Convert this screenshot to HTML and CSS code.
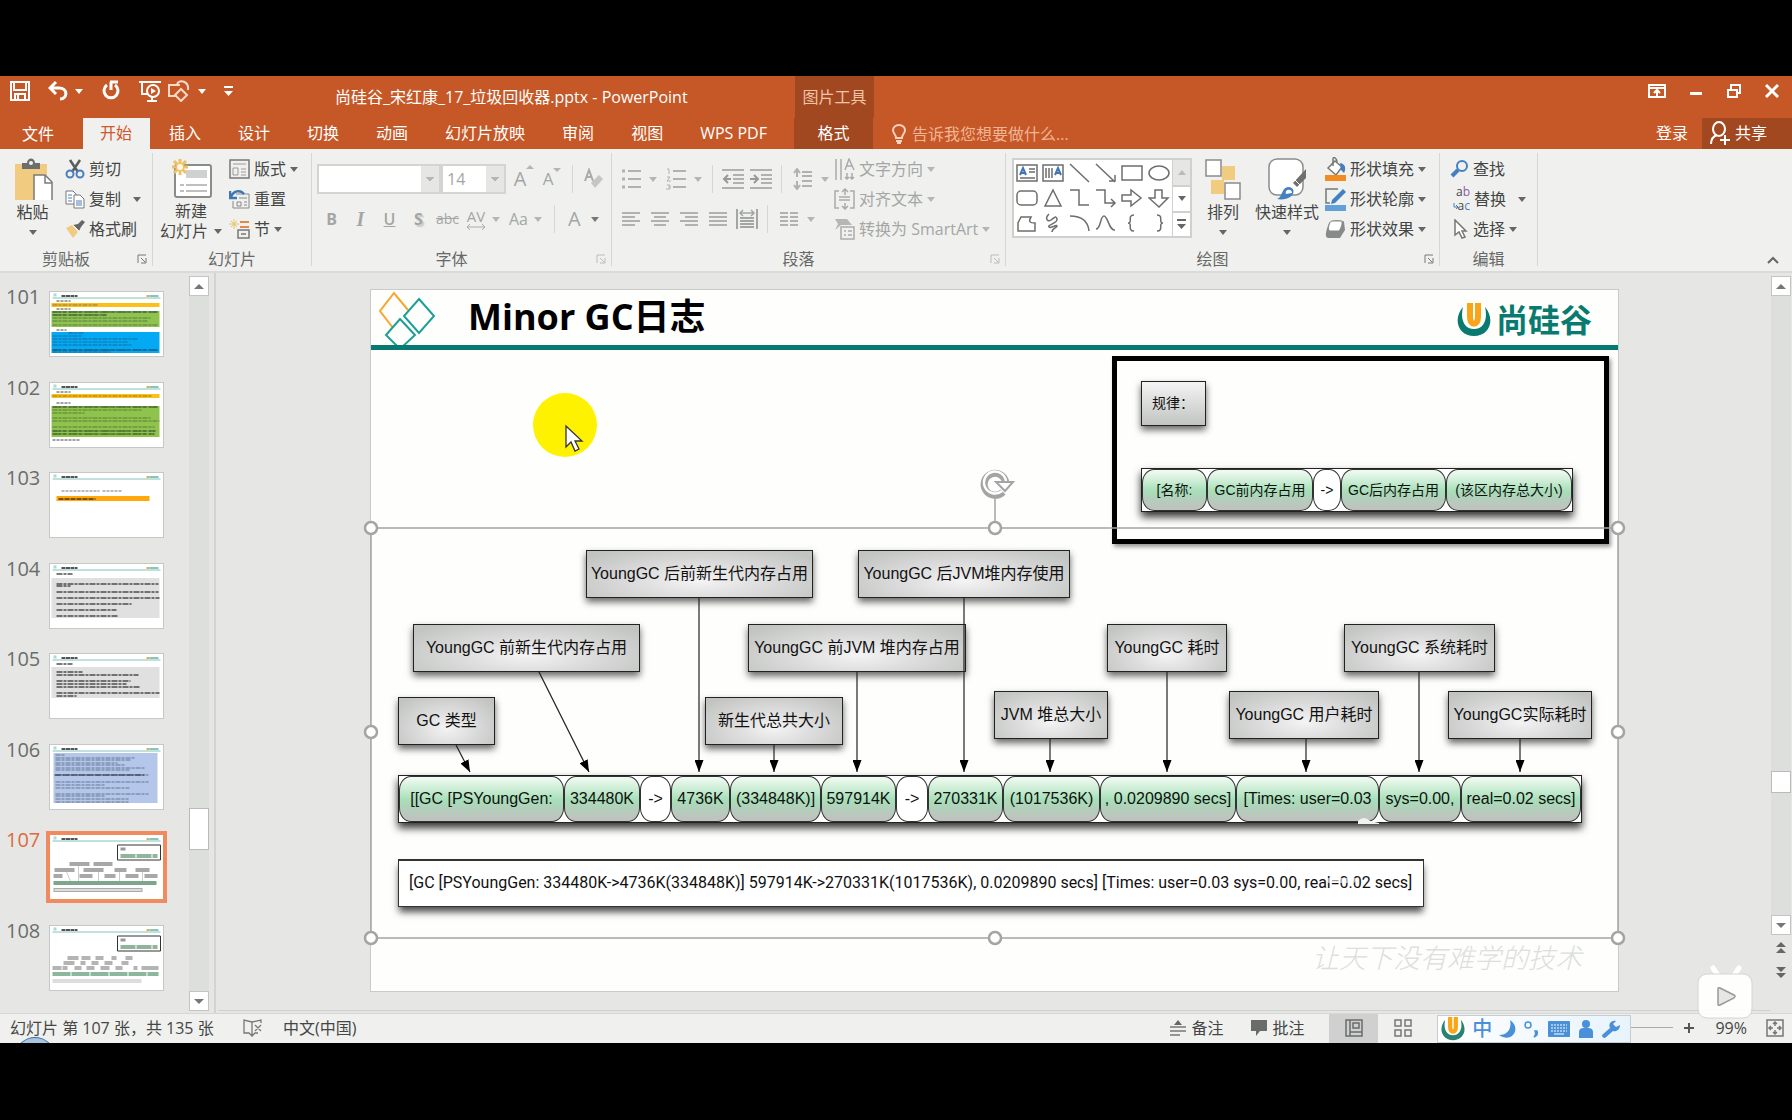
FILE: index.html
```html
<!DOCTYPE html>
<html lang="zh-CN">
<head>
<meta charset="utf-8">
<title>尚硅谷_宋红康_17_垃圾回收器.pptx - PowerPoint</title>
<link rel="stylesheet" href="styles.css">
</head>
<body>
<div class="app">
<header class="header">
  <div class="title-row">
    <div class="quick">
      <button class="q" aria-label="保存"><svg width="20" height="22" viewBox="0 0 20 22" fill="none" stroke="#fff" stroke-width="2"><path d="M1 2h18v18H1zM4 2v8h12V2M5 20v-6h10v6M8 15v4"/></svg></button>
      <button class="q undo" aria-label="撤消"><svg width="20" height="22" viewBox="0 0 20 22" fill="none" stroke="#fff" stroke-width="3"><path d="M2 8h9c9 0 9 11 1 11M8 2L2 8l6 6"/></svg><span class="caret"></span></button>
      <button class="q" aria-label="重复"><svg width="20" height="22" viewBox="0 0 20 22" fill="none" stroke="#fff" stroke-width="3"><path d="M6 5a7 7 0 1 0 8 0M9 2h8M10 2v8"/></svg></button>
      <button class="q" aria-label="从头放映"><svg width="22" height="22" viewBox="0 0 22 22" fill="none" stroke="#fff" stroke-width="2"><path d="M0 2h22M3 3v11h6M8 21h10M13 17v4"/><circle cx="14" cy="11" r="6"/><path d="M12 8l5 3-5 3z" fill="#fff" stroke="none"/></svg></button>
      <button class="q" aria-label="形状"><svg width="24" height="22" viewBox="0 0 24 22" fill="none" stroke="#fbd9c8" stroke-width="2"><path d="M10 16H2V5h11M10 4c3-5 12-3 11 6M14 9l6 6-6 6-6-6z"/></svg><span class="caret"></span></button>
      <button class="q more" aria-label="自定义快速访问工具栏"><svg width="9" height="12" viewBox="0 0 9 12" fill="#fff"><path d="M0 1h9v2H0zM0 6h9l-4.500 5z"/></svg></button>
    </div>
    <h1 class="doc-title">尚硅谷_宋红康_17_垃圾回收器.pptx - PowerPoint</h1>
    <div class="context-title">图片工具</div>
    <div class="window-buttons">
      <button aria-label="功能区显示选项"><svg width="18" height="16" viewBox="0 0 18 16" fill="none" stroke="#fff" stroke-width="2"><path d="M1 2h16v12H1zM1 5h16M9 13V7M6 10l3-3 3 3"/></svg></button>
      <button aria-label="最小化"><svg width="14" height="16" viewBox="0 0 14 16"><path d="M1 9h12v3H1z" fill="#fff"/></svg></button>
      <button aria-label="还原"><svg width="16" height="16" viewBox="0 0 16 16" fill="none" stroke="#fff" stroke-width="2"><path d="M2 7h9v7H2zM5 6V2h9v8h-3"/></svg></button>
      <button aria-label="关闭"><svg width="14" height="16" viewBox="0 0 14 16" stroke="#fff" stroke-width="3"><path d="M1 2l12 12M13 2L1 14"/></svg></button>
    </div>
  </div>
  <nav class="tabs">
    <button class="tab file">文件</button>
    <button class="tab active">开始</button>
    <button class="tab">插入</button>
    <button class="tab">设计</button>
    <button class="tab">切换</button>
    <button class="tab">动画</button>
    <button class="tab">幻灯片放映</button>
    <button class="tab">审阅</button>
    <button class="tab">视图</button>
    <button class="tab">WPS PDF</button>
    <button class="tab context">格式</button>
    <label class="tell"><svg width="14" height="20" viewBox="0 0 14 20" fill="none" stroke="#f8d3bf" stroke-width="2"><path d="M4 14c0-4-3-4-3-8a6 5 0 0 1 12 0c0 4-3 4-3 8zM4 17h6M5 19h4"/></svg><input type="text" placeholder="告诉我您想要做什么..." aria-label="告诉我您想要做什么"></label>
    <button class="tab login">登录</button>
    <button class="tab share"><svg width="20" height="24" viewBox="0 0 20 24" fill="none" stroke="#fff" stroke-width="2"><ellipse cx="9" cy="8" rx="6" ry="7"/><path d="M1 23c0-5 3-8 6-9M10 19h10M15 14v10"/></svg>共享</button>
  </nav>
</header>

<section class="ribbon" aria-label="开始">
  <div class="group g-clip">
    <div class="group-body">
      <button class="big paste"><svg width="40" height="42" viewBox="0 0 40 42"><path d="M2 6h32v36H2z" fill="#f1cb7f"/><path d="M9 5h5c0-6 8-6 8 0h5v6H9z" fill="#6d6f6e"/><circle cx="18" cy="5" r="2" fill="#f0f1ef"/><path d="M21 17h11l7 7v19H21z" fill="#fff" stroke="#7a7c7b" stroke-width="1.500"/><path d="M32 17v8h7" fill="none" stroke="#7a7c7b" stroke-width="1.500"/></svg><span>粘贴</span><span class="caret"></span></button>
      <div class="cmds">
        <button class="cmd"><svg width="20" height="20" viewBox="0 0 20 20" fill="none" stroke-width="2"><path d="M5 1l8 12M15 1L7 13" stroke="#5b5d5c" stroke-width="2.500"/><circle cx="5" cy="15" r="3.500" stroke="#4a7fbd"/><circle cx="15" cy="15" r="3.500" stroke="#4a7fbd"/></svg>剪切</button>
        <button class="cmd wide"><svg width="20" height="20" viewBox="0 0 20 20" fill="#fff" stroke="#777"><path d="M1 2h7l3 3v10H1z"/><path d="M9 6h6l4 4v9H9z"/><path d="M3 6h4M3 9h4M3 12h4M11 12h6M11 14h6M11 16h6" stroke="#4a7fbd"/></svg>复制<span class="caret"></span></button>
        <button class="cmd"><svg width="20" height="20" viewBox="0 0 20 20"><path d="M1 9l6-3 6 7-5 6z" fill="#f1cb7f"/><path d="M8 6l5-1 4-4 3 2-4 5-2 4z" fill="#666"/><path d="M8 6l6 6" stroke="#f0f1ef"/></svg>格式刷</button>
      </div>
    </div>
    <div class="group-label"><span>剪贴板</span><button class="launch" aria-label="剪贴板选项"><svg width="10" height="10" viewBox="0 0 10 10" fill="none" stroke="#777"><path d="M1 9V1h8M4 4l4 4M9 4v5H4"/></svg></button></div>
  </div>
  <div class="group g-slides">
    <div class="group-body">
      <button class="big newslide"><svg width="42" height="42" viewBox="0 0 42 42"><rect x="5" y="8" width="36" height="32" rx="2" fill="#fff" stroke="#8a8c8b" stroke-width="2"/><path d="M16 13h21v8H16z" fill="#cfd0d0"/><path d="M10 28h4M16 28h21M10 34h4M16 34h21" stroke="#aaa" stroke-width="1.500"/><g stroke="#eec068" stroke-width="3"><path d="M10 2v16M2 10h16M4 4l12 12M16 4L4 16"/></g><circle cx="10" cy="10" r="3" fill="#fff6e0"/></svg><span>新建</span><span class="line">幻灯片<i class="caret"></i></span></button>
      <div class="cmds">
        <button class="cmd"><svg width="21" height="20" viewBox="0 0 21 20" fill="none" stroke="#777"><path d="M1 1h19v18H1z" stroke-width="1.500"/><path d="M4 5h13M4 9h5v7H4zM12 10h5M12 13h5M12 16h5" stroke="#999"/></svg>版式<span class="caret"></span></button>
        <button class="cmd"><svg width="21" height="20" viewBox="0 0 21 20" fill="none"><path d="M7 5h13v14H4v-7M10 9h8M8 13h4v4H8zM15 13h3M15 16h3" stroke="#888"/><path d="M2 8c2-6 9-8 13-3M1 2v7h7" stroke="#3f74b5" stroke-width="2.500"/></svg>重置</button>
        <button class="cmd"><svg width="21" height="20" viewBox="0 0 21 20" fill="none"><path d="M11 3h9M11 8h9" stroke="#dc8b4c" stroke-width="2"/><path d="M9 11h11v8H9zM12 15h5" stroke="#777" stroke-width="1.500"/><path d="M5 0v10M0 5h10M2 2l6 6M8 2L2 8" stroke="#efc06c"/></svg>节<span class="caret"></span></button>
      </div>
    </div>
    <div class="group-label solo"><span>幻灯片</span></div>
  </div>
  <div class="group g-font off">
    <div class="group-body stack">
      <div class="row tall">
        <select class="combo font" aria-label="字体"><option></option></select>
        <select class="combo size" aria-label="字号"><option>14</option></select>
        <button class="ib fs" aria-label="增大字号">A<sup class="up"></sup></button>
        <button class="ib fs small" aria-label="减小字号">A<sup class="down"></sup></button>
        <i class="sep"></i>
        <button class="ib" aria-label="清除格式"><svg width="20" height="22" viewBox="0 0 20 22"><path d="M2 13L6 2l4 11M3 9h6" fill="none" stroke="#aaa" stroke-width="2"/><path d="M8 15l8-8 4 4-8 9z" fill="#c4c6c5"/></svg></button>
      </div>
      <div class="row">
        <button class="ib b">B</button><button class="ib i">I</button><button class="ib u">U</button><button class="ib s">S</button><button class="ib abc">abc</button>
        <button class="split av"><span>AV<svg width="20" height="7" viewBox="0 0 20 7" fill="none" stroke="#aaa"><path d="M1 4h18M4 1L1 4l3 3M16 1l3 3-3 3"/></svg></span><i class="caret"></i></button>
        <button class="split">Aa<i class="caret"></i></button>
        <i class="sep"></i>
        <button class="split color">A<i class="caret dark"></i></button>
      </div>
    </div>
    <div class="group-label"><span>字体</span><button class="launch" aria-label="字体选项"><svg width="10" height="10" viewBox="0 0 10 10" fill="none" stroke="#bbb"><path d="M1 9V1h8M4 4l4 4M9 4v5H4"/></svg></button></div>
  </div>
  <div class="group g-para off">
    <div class="group-body">
      <div class="stack para">
        <div class="row tall">
          <button class="split" aria-label="项目符号"><svg width="20" height="22" viewBox="0 0 20 22" stroke="#b0b2b1" stroke-width="2"><path d="M7 3h13M7 11h13M7 19h13"/><path d="M1 3h3M1 11h3M1 19h3" stroke-width="3"/></svg><i class="caret"></i></button>
          <button class="split" aria-label="编号"><svg width="20" height="22" viewBox="0 0 20 22" fill="none" stroke="#b0b2b1" stroke-width="2"><path d="M7 3h13M7 11h13M7 19h13"/><path d="M1 1h2v5M1 9h3l-3 4h4M1 17h3v4H0M2 19h2" stroke-width="1"/></svg><i class="caret"></i></button>
          <i class="sep"></i>
          <button class="ib" aria-label="减少缩进"><svg width="22" height="20" viewBox="0 0 22 20" fill="none" stroke="#b0b2b1" stroke-width="2"><path d="M0 1h22M11 6h11M11 10h11M11 14h11M0 19h22"/><path d="M9 10H2M6 6l-4 4 4 4" stroke="#999"/></svg></button>
          <button class="ib" aria-label="增加缩进"><svg width="22" height="20" viewBox="0 0 22 20" fill="none" stroke="#b0b2b1" stroke-width="2"><path d="M0 1h22M11 6h11M11 10h11M11 14h11M0 19h22"/><path d="M0 10h8M4 6l4 4-4 4" stroke="#999"/></svg></button>
          <i class="sep"></i>
          <button class="split" aria-label="行距"><svg width="20" height="22" viewBox="0 0 20 22" fill="none" stroke="#b0b2b1" stroke-width="2"><path d="M9 4h10M9 8h10M9 13h10M9 18h10M4 2v7M1 5l3-4 3 4M4 13v7M1 17l3 4 3-4"/></svg><i class="caret"></i></button>
        </div>
        <div class="row">
          <button class="ib" aria-label="左对齐"><svg width="20" height="16" viewBox="0 0 20 16" stroke="#b0b2b1" stroke-width="2"><path d="M1 2h18M1 6h13M1 10h18M1 14h13"/></svg></button>
          <button class="ib" aria-label="居中"><svg width="20" height="16" viewBox="0 0 20 16" stroke="#b0b2b1" stroke-width="2"><path d="M1 2h18M4 6h12M1 10h18M4 14h12"/></svg></button>
          <button class="ib" aria-label="右对齐"><svg width="20" height="16" viewBox="0 0 20 16" stroke="#b0b2b1" stroke-width="2"><path d="M1 2h18M6 6h13M1 10h18M6 14h13"/></svg></button>
          <button class="ib" aria-label="两端对齐"><svg width="20" height="16" viewBox="0 0 20 16" stroke="#b0b2b1" stroke-width="2"><path d="M1 2h18M1 6h18M1 10h18M1 14h18"/></svg></button>
          <button class="ib" aria-label="分散对齐"><svg width="22" height="22" viewBox="0 0 22 22" fill="none" stroke="#a4a6a5" stroke-width="2"><path d="M1 1v20M21 1v20M4 10h14M4 13h14M4 16h14M4 19h14"/><path d="M4 5h14M7 2L4 5l3 3M15 2l3 3-3 3" stroke-width="1.500"/></svg></button>
          <i class="sep"></i>
          <button class="split" aria-label="分栏"><svg width="20" height="16" viewBox="0 0 20 16" stroke="#b0b2b1" stroke-width="2"><path d="M1 2h8M1 6h8M1 10h8M1 14h8M11 2h8M11 6h8M11 10h8M11 14h8"/></svg><i class="caret"></i></button>
        </div>
      </div>
      <div class="cmds">
        <button class="cmd"><svg width="21" height="22" viewBox="0 0 21 22" fill="none" stroke="#aaa" stroke-width="1.500"><path d="M2 1v21M7 1v21M13 15v6M18 15v6M11 19l2 2 2-2M16 19l2 2 2-2M11 12l4-11 5 11M12 8h6"/></svg>文字方向<span class="caret"></span></button>
        <button class="cmd"><svg width="21" height="22" viewBox="0 0 21 22" fill="none" stroke="#aaa" stroke-width="1.500"><path d="M5 3H1v17h4M16 3h4v17h-4M11 1v6M8 4l3-3 3 3M11 15v6M8 18l3 3 3-3M5 9h11M5 12h11"/></svg>对齐文本<span class="caret"></span></button>
        <button class="cmd"><svg width="21" height="22" viewBox="0 0 21 22" fill="none" stroke="#aaa" stroke-width="1.500"><path d="M1 1h12l5 6H7l-6 5 3-6z" fill="#b5b7b6" stroke="none"/><path d="M7 9h13v12H7zM10 13h2M10 17h2M14 13h4M14 17h4"/></svg>转换为 SmartArt<span class="caret"></span></button>
      </div>
    </div>
    <div class="group-label"><span>段落</span><button class="launch" aria-label="段落选项"><svg width="10" height="10" viewBox="0 0 10 10" fill="none" stroke="#bbb"><path d="M1 9V1h8M4 4l4 4M9 4v5H4"/></svg></button></div>
  </div>
  <div class="group g-draw">
    <div class="group-body">
      <div class="gallery">
        <div class="shapes">
          <button aria-label="文本框"><svg viewBox="0 0 22 20"><path d="M1 2h20v16H1zM13 6h6M13 9h6M4 15h15"/><path d="M4 12l3-7 3 7M5 10h4" stroke="#3f74b5" stroke-width="2"/></svg></button>
          <button aria-label="竖排文本框"><svg viewBox="0 0 22 20"><path d="M1 2h20v16H1zM4 5v10M7 5v10M10 5v10"/><path d="M13 12l3-7 3 7M14 10h4" stroke="#3f74b5" stroke-width="2"/></svg></button>
          <button aria-label="直线"><svg viewBox="0 0 22 20"><path d="M1 1l19 18"/></svg></button>
          <button aria-label="箭头"><svg viewBox="0 0 22 20"><path d="M1 1l19 18M14 18h6v-6"/></svg></button>
          <button aria-label="矩形"><svg viewBox="0 0 22 20"><path d="M1 3h20v14H1z"/></svg></button>
          <button aria-label="椭圆"><svg viewBox="0 0 22 20"><ellipse cx="11" cy="10" rx="10" ry="7"/></svg></button>
          <button aria-label="圆角矩形"><svg viewBox="0 0 22 20"><rect x="1" y="3" width="20" height="14" rx="4"/></svg></button>
          <button aria-label="三角形"><svg viewBox="0 0 22 20"><path d="M11 2l8 16H3z"/></svg></button>
          <button aria-label="肘形连接符"><svg viewBox="0 0 22 20"><path d="M1 2h9v15h10"/></svg></button>
          <button aria-label="肘形箭头"><svg viewBox="0 0 22 20"><path d="M1 2h9v13h10M16 11l4 4-4 4"/></svg></button>
          <button aria-label="右箭头"><svg viewBox="0 0 22 20"><path d="M1 7h9V2l10 8-10 8v-5H1z"/></svg></button>
          <button aria-label="下箭头"><svg viewBox="0 0 22 20"><path d="M7 2h7v8h6l-9 9-10-9h6z"/></svg></button>
          <button aria-label="任意多边形"><svg viewBox="0 0 22 20"><path d="M5 4h10c-3 5-1 6 4 6v8H2v-8z"/></svg></button>
          <button aria-label="自由曲线"><svg viewBox="0 0 22 20"><path d="M7 1c-5 5-1 8 2 6s5-5 6-1-10 6-8 8 8-3 8-1-5 2-5 6"/></svg></button>
          <button aria-label="弧形"><svg viewBox="0 0 22 20"><path d="M1 3c12 0 18 5 19 15"/></svg></button>
          <button aria-label="曲线"><svg viewBox="0 0 22 20"><path d="M1 16C6 16 5 3 9 3s5 15 11 14"/></svg></button>
          <button aria-label="左大括号"><svg viewBox="0 0 22 20"><path d="M13 2c-7 0-1 8-6 8 5 0-1 8 6 8"/></svg></button>
          <button aria-label="右大括号"><svg viewBox="0 0 22 20"><path d="M9 2c7 0 1 8 6 8-5 0 1 8-6 8"/></svg></button>
        </div>
        <div class="gallery-scroll">
          <button class="dis" aria-label="上一行"><i class="caret upward"></i></button>
          <button aria-label="下一行"><i class="caret"></i></button>
          <button aria-label="其他"><svg width="9" height="12" viewBox="0 0 9 12" fill="#666"><path d="M0 1h9v2H0zM0 6h9l-4.500 5z"/></svg></button>
        </div>
      </div>
      <button class="big arrange"><svg width="38" height="42" viewBox="0 0 38 42"><path d="M18 8h13v14H18zM7 22h13v14H7z" fill="#f1cb7f"/><path d="M2 2h15v16H2zM21 25h15v16H21z" fill="#fff" stroke="#8a8c8b" stroke-width="1.500"/></svg><span>排列</span><span class="caret"></span></button>
      <button class="big styles"><svg width="40" height="44" viewBox="0 0 40 44"><rect x="2" y="3" width="34" height="36" rx="8" fill="#fff" stroke="#8a8c8b" stroke-width="1.500"/><path d="M39 13v9l-9 9-4-4z" fill="#6f7170"/><path d="M28 24l6 6" stroke="#fff"/><path d="M10 43c6-2 4-11 11-12 7 0 7 7 2 10-3 2-8 3-13 2z" fill="#4280c2"/><path d="M19 38c-2-5 6-6 6-1z" fill="#fff"/></svg><span>快速样式</span><span class="caret"></span></button>
      <div class="cmds">
        <button class="cmd"><svg width="21" height="24" viewBox="0 0 21 24"><path d="M3 11l7-7 7 6-6 8z" fill="#fff" stroke="#777" stroke-width="1.500"/><path d="M8 9V2c0-3 4-1 4 3" fill="none" stroke="#777" stroke-width="1.500"/><path d="M15 6c6 1 6 6 4 10l-3-3z" fill="#4280c2"/><path d="M0 18h21v6H0z" fill="#f28b20"/></svg>形状填充<span class="caret"></span></button>
        <button class="cmd"><svg width="21" height="24" viewBox="0 0 21 24"><path d="M13 2H1v14h4" fill="none" stroke="#777" stroke-width="1.500"/><path d="M7 13L18 2l3 3L10 16l-4 1z" fill="#4280c2"/><path d="M0 18h21v6H0z" fill="#62a0d8"/></svg>形状轮廓<span class="caret"></span></button>
        <button class="cmd"><svg width="21" height="20" viewBox="0 0 21 20"><path d="M4 4c2-4 15-3 15-1l1 8-5 8H3c-3-1-3-5 1-15z" fill="#888a89"/><path d="M7 2h9c2 0 1 6-2 10H5c-3 0-1-10 2-10z" fill="#fff" stroke="#888"/></svg>形状效果<span class="caret"></span></button>
      </div>
    </div>
    <div class="group-label"><span>绘图</span><button class="launch" aria-label="绘图选项"><svg width="10" height="10" viewBox="0 0 10 10" fill="none" stroke="#777"><path d="M1 9V1h8M4 4l4 4M9 4v5H4"/></svg></button></div>
  </div>
  <div class="group g-edit">
    <div class="group-body">
      <div class="cmds">
        <button class="cmd"><svg width="19" height="18" viewBox="0 0 19 18" fill="none" stroke="#4280c2"><circle cx="12" cy="6" r="5" stroke-width="2"/><path d="M8 10l-6 6" stroke-width="4"/></svg>查找</button>
        <button class="cmd wide"><span class="abac"><span>a<b>b</b></span><span><svg width="5" height="6" viewBox="0 0 5 6" fill="none" stroke="#4280c2"><path d="M1 0v4h3M3 2l2 2-2 2"/></svg>a<em>c</em></span></span>替换<span class="caret"></span></button>
        <button class="cmd"><svg width="19" height="20" viewBox="0 0 19 20" fill="#fff" stroke="#777" stroke-width="1.500"><path d="M5 1v15l4-3 3 6 3-1-3-6h4z"/></svg>选择<span class="caret"></span></button>
      </div>
    </div>
    <div class="group-label solo"><span>编辑</span></div>
  </div>
  <button class="collapse" aria-label="折叠功能区"><svg width="12" height="8" viewBox="0 0 12 8" fill="none" stroke="#666" stroke-width="2"><path d="M1 7l5-5 5 5"/></svg></button>
</section>

<svg class="defs" width="0" height="0" aria-hidden="true">
  <symbol id="cap" viewBox="0 0 112 64"><path d="M2 6h108" stroke="#7fc4bd"/><path d="M3 3h3" stroke="#a9dcd5" stroke-width="3"/><path d="M11 4h16" stroke="#555" stroke-width="2" stroke-dasharray="4 .5"/><path d="M96 4h3" stroke="#e0b050" stroke-width="2"/><path d="M99 4h9" stroke="#8cc4bd" stroke-width="2"/></symbol>
  <symbol id="rule" viewBox="0 0 112 64"><path d="M67 10h43v15H67z" fill="#fff" stroke="#333"/><path d="M70 14h5" stroke="#999" stroke-width="3"/><path d="M70 21h37" stroke="#8fb59c" stroke-width="4" stroke-dasharray="15 1"/></symbol>
</svg>

<main class="workspace">
  <aside class="panel" aria-label="幻灯片缩略图">
    <ol class="thumbs">
      <li><span>101</span><svg viewBox="0 0 112 64"><use href="#cap"/><path d="M6 9h14M6 17h14M6 38h10" stroke="#444" stroke-dasharray="3 1"/><path d="M1 11h108v4H1z" fill="#fcc018"/><path d="M1 19h108v16H1z" fill="#8fc34d"/><path d="M1 40h108v21H1z" fill="#04a9f4"/><path d="M2 13h46M2 20h106M2 23h54M2 26h98M2 29h95M2 33h105M18 41h15M2 44h30M2 47h85M2 50h76M2 53h80M2 58h105M2 60h58" stroke="#234" stroke-dasharray="5 1 3 1" opacity=".5"/><path d="M2 20h106M2 23h54M2 58h105" stroke="#122" stroke-dasharray="9 1 4 2" opacity=".6"/></svg></li>
      <li><span>102</span><svg viewBox="0 0 112 64"><use href="#cap"/><path d="M6 9h14M6 20h14M2 57h28" stroke="#444" stroke-dasharray="3 1"/><path d="M1 11h108v4H1z" fill="#fcc018"/><path d="M1 23h108v31H1z" fill="#8fc34d"/><path d="M2 13h100M2 24h106M2 27h90M2 30h32M2 35h98M2 38h107M2 44h102M2 48h103M2 51h102" stroke="#243a18" stroke-dasharray="5 1 3 1" opacity=".5"/><path d="M2 24h106M2 48h103M2 51h102" stroke="#122" stroke-dasharray="9 1 4 2" opacity=".6"/></svg></li>
      <li><span>103</span><svg viewBox="0 0 112 64"><use href="#cap"/><path d="M11 18h38M52 18h20" stroke="#777" stroke-dasharray="3 1"/><path d="M6 23h93v5H6z" fill="#ffa70b"/><path d="M8 26h37" stroke="#7a5200" stroke-width="2" stroke-dasharray="5 1"/></svg></li>
      <li><span>104</span><svg viewBox="0 0 112 64"><use href="#cap"/><path d="M1 14h108v40H1z" fill="#dfe0df"/><path d="M6 10h16M6 20h102M6 22h14M6 28h102M6 34h103M6 40h75M6 46h60M6 52h62" stroke="#333" stroke-width="1.500" stroke-dasharray="6 1 3 1" opacity=".85"/></svg></li>
      <li><span>105</span><svg viewBox="0 0 112 64"><use href="#cap"/><path d="M1 13h108v31H1z" fill="#dfe0df"/><path d="M6 10h16M6 18h26M6 21h82M6 27h74M6 30h70M6 33h84M6 39h103M6 42h20" stroke="#333" stroke-width="1.500" stroke-dasharray="6 1 3 1" opacity=".85"/></svg></li>
      <li><span>106</span><svg viewBox="0 0 112 64"><use href="#cap"/><path d="M3 8h104v50H3z" fill="#b4c7ea"/><path d="M5 10h9M5 13h80M5 15h75M5 18h62M5 20h70M5 23h90M5 25h74M5 30h93M5 37h93M5 40h50M5 43h74M5 49h93M5 51h50M5 54h73M5 57h73" stroke="#35405c" stroke-dasharray="5 1 3 1" opacity=".6"/><path d="M4 30h90" stroke="#222" stroke-dasharray="7 1"/></svg></li>
      <li class="selected"><span>107</span><svg viewBox="0 0 112 64"><use href="#cap"/><use href="#rule"/><path d="M19 29h20M43 29h19M4 35h20M33 35h20M64 35h12M85 35h14M3 41h9M29 41h13M54 41h11M75 41h13M94 41h13" stroke="#a8a8a8" stroke-width="4"/><path d="M16 37l4 9M28 31v15M48 37v9M69 37v9M92 37v9" stroke="#999" stroke-width=".5"/><path d="M3 48h103" stroke="#7da68c" stroke-width="4"/><path d="M3 55h89" stroke="#aaa" stroke-width="4"/><path d="M4 55h87" stroke="#ddd" stroke-width="2"/></svg></li>
      <li><span>108</span><svg viewBox="0 0 112 64"><use href="#cap"/><use href="#rule"/><path d="M17 32h11M31 32h9M45 32h8M61 32h5M75 32h7M13 37h11M30 37h5M41 37h7M54 37h8M71 37h7M2 42h9M12 42h5M24 42h7M36 42h8M50 42h9M65 42h7M83 42h4M91 42h17" stroke="#b4b4b4" stroke-width="4"/><path d="M2 48h106" stroke="#8bb89a" stroke-width="4" stroke-dasharray="18 1"/><path d="M2 55h89" stroke="#ddd" stroke-width="4"/></svg></li>
    </ol>
    <div class="scrollbar">
      <button aria-label="向上滚动"><i class="caret upward big-caret"></i></button>
      <i class="track left-a"></i><i class="thumb tall-thumb"></i><i class="track left-b"></i>
      <button aria-label="向下滚动"><i class="caret big-caret"></i></button>
    </div>
  </aside>

  <div class="stage">
    <article class="slide">
      <svg class="deco" width="70" height="60" viewBox="0 0 70 60" fill="none" stroke-width="2"><path d="M22 38L9 21 23 3l14 17" stroke="#f6a62c"/><path d="M48 9l15 17-15 17-15-17z" stroke="#1d9f96"/><path d="M29 29l15 16-15 14-14-14z" stroke="#1d9f96"/></svg>
      <h2>Minor GC日志</h2>
      <div class="brand"><svg width="34" height="36" viewBox="0 0 34 36"><path d="M6 5C-5 18 2 34 17 34S39 18 28 5c3 12-1 22-11 22S3 17 6 5z" fill="#087a70"/><path d="M13 1v14c0 9 8 9 8 0V1" fill="none" stroke="#f9a51a" stroke-width="6"/></svg><span>尚硅谷</span></div>
      <hr class="teal">
      <section class="frame"></section>
      <div class="note rule-note">规律：</div>
      <div class="bar rule-bar"><span class="w65">[名称:</span><span class="w106">GC前内存占用</span><span class="w28 plain">-&gt;</span><span class="w105">GC后内存占用</span><span class="w126">(该区内存总大小)</span></div>

      <div class="note n1">YoungGC 后前新生代内存占用</div>
      <div class="note n2">YoungGC 前新生代内存占用</div>
      <div class="note n3">GC 类型</div>
      <div class="note n4">新生代总共大小</div>
      <div class="note n5">YoungGC 前JVM 堆内存占用</div>
      <div class="note n6">YoungGC 后JVM堆内存使用</div>
      <div class="note n7">JVM 堆总大小</div>
      <div class="note n8">YoungGC 耗时</div>
      <div class="note n9">YoungGC 用户耗时</div>
      <div class="note n10">YoungGC 系统耗时</div>
      <div class="note n11">YoungGC实际耗时</div>

      <div class="bar log-bar"><span class="w165">[[GC [PSYoungGen:</span><span class="w76">334480K</span><span class="w31 plain">-&gt;</span><span class="w59">4736K</span><span class="w91">(334848K)]</span><span class="w75">597914K</span><span class="w32 plain">-&gt;</span><span class="w75">270331K</span><span class="w97">(1017536K)</span><span class="w136">, 0.0209890 secs]</span><span class="w143">[Times: user=0.03</span><span class="w82">sys=0.00,</span><span class="w120">real=0.02 secs]</span></div>
      <div class="raw-log">[GC [PSYoungGen: 334480K-&gt;4736K(334848K)] 597914K-&gt;270331K(1017536K), 0.0209890 secs] [Times: user=0.03 sys=0.00, real=0.02 secs]</div>
      <p class="motto">让天下没有难学的技术</p>

      <svg class="overlay" width="1247" height="701" viewBox="0 0 1247 701">
        <defs><marker id="head" markerUnits="userSpaceOnUse" markerWidth="12" markerHeight="9" refX="12" refY="4.500" orient="auto"><path d="M0 0l12 4.500L0 9z"/></marker></defs>
        <g stroke="#222" stroke-width="1.200">
          <path d="M85 455L99 482" marker-end="url(#head)"/><path d="M168 382L218 482" marker-end="url(#head)"/><path d="M328 308V482" marker-end="url(#head)"/><path d="M403 455V482" marker-end="url(#head)"/><path d="M486 382V482" marker-end="url(#head)"/><path d="M593 308V482" marker-end="url(#head)"/><path d="M679 449V482" marker-end="url(#head)"/><path d="M796 382V482" marker-end="url(#head)"/><path d="M935 449V482" marker-end="url(#head)"/><path d="M1048 382V482" marker-end="url(#head)"/><path d="M1149 449V482" marker-end="url(#head)"/>
        </g>
        <path d="M987 531q6-6 12 0l9 2v1h-21z" fill="#eef3ef"/>
        <path d="M953 588h34l-4 5h-26z" fill="#fff" opacity=".6"/>
        <g fill="none" stroke="#a3a5a4" stroke-width="1.500"><path d="M0 238h1247v410H0zM624 206v26"/></g>
        <g fill="#fff" stroke="#a3a5a4" stroke-width="2.500"><circle cx="0" cy="238" r="6"/><circle cx="624" cy="238" r="6"/><circle cx="1247" cy="238" r="6"/><circle cx="0" cy="442" r="6"/><circle cx="1247" cy="442" r="6"/><circle cx="0" cy="648" r="6"/><circle cx="624" cy="648" r="6"/><circle cx="1247" cy="648" r="6"/></g>
        <g fill="none"><path d="M632 202a11 11 0 1 1 3-9" stroke="#a3a5a4" stroke-width="7"/><path d="M631 201a11 11 0 1 1 4-8" stroke="#fff" stroke-width="2.500"/><path d="M625 192h17l-8 9z" fill="#fff" stroke="#a3a5a4" stroke-width="2"/></g>
        <circle cx="194" cy="135" r="32" fill="#fff200"/>
        <path d="M195 136v21l5-5 4 9 4-2-4-8h7z" fill="#fff" stroke="#333" stroke-width="1.300"/>
      </svg>
    </article>
  </div>

  <div class="scrollbar right">
    <button aria-label="向上滚动"><i class="caret upward big-caret"></i></button>
    <i class="track right-a"></i><i class="thumb short-thumb"></i><i class="track right-b"></i>
    <button aria-label="向下滚动"><i class="caret big-caret"></i></button>
    <button class="page" aria-label="上一张幻灯片"><svg width="10" height="12" viewBox="0 0 10 12" fill="#666"><path d="M5 0l5 5H0zM5 6l5 5H0z"/></svg></button>
    <button class="page" aria-label="下一张幻灯片"><svg width="10" height="12" viewBox="0 0 10 12" fill="#666"><path d="M0 1h10L5 6zM0 7h10l-5 5z"/></svg></button>
  </div>
  <svg class="play" width="58" height="56" viewBox="0 0 58 56"><path d="M17 4l6 9M43 4l-6 9" stroke="#fff" stroke-width="5" stroke-linecap="round"/><rect x="2" y="10" width="54" height="44" rx="9" fill="#fff" fill-opacity=".93" stroke="#d4d4d4"/><path d="M22 25q0-2 2-1l14 7q2 1 0 3l-14 7q-2 1-2-1z" fill="#e6e6e6" stroke="#999" stroke-width="1.500"/></svg>
</main>

<footer class="status">
  <span class="count">幻灯片 第 107 张，共 135 张</span>
  <button class="spell" aria-label="拼写检查"><svg width="20" height="18" viewBox="0 0 20 18" fill="none" stroke="#777" stroke-width="1.300"><path d="M9 3L1 1v13h5l3 3zM9 3l9-2v3M9 17l3-3h3M12 6l6 6M18 6l-6 6"/></svg></button>
  <button>中文(中国)</button>
  <span class="grow"></span>
  <button class="notes"><svg width="16" height="16" viewBox="0 0 16 16" fill="none" stroke="#777" stroke-width="1.500"><path d="M0 7h16M0 11h16M0 15h10"/><path d="M4 5l4-5 4 5z" fill="#666" stroke="none"/></svg>备注</button>
  <button class="notes"><svg width="16" height="16" viewBox="0 0 16 16"><path d="M0 0h16v11H9l-4 5v-5H0z" fill="#6a6c6b"/></svg>批注</button>
  <button class="view on" aria-label="普通视图"><svg width="18" height="18" viewBox="0 0 18 18" fill="none" stroke="#6a6c6b" stroke-width="1.500"><path d="M1 1h16v16H1zM5 1v16M5 13h12M8 4h6v5H8z"/></svg></button>
  <button class="view" aria-label="幻灯片浏览"><svg width="18" height="18" viewBox="0 0 18 18" fill="none" stroke="#777" stroke-width="1.500"><path d="M1 1h6v6H1zM11 1h6v6h-6zM1 11h6v6H1zM11 11h6v6h-6z"/></svg></button>
  <input class="zoom" type="range" min="10" max="400" value="99" aria-label="缩放">
  <button class="plus" aria-label="放大"><svg width="12" height="12" viewBox="0 0 12 12" stroke="#555" stroke-width="2"><path d="M1 6h10M6 1v10"/></svg></button>
  <button class="pct">99%</button>
  <button class="fit" aria-label="适应窗口"><svg width="18" height="18" viewBox="0 0 18 18" fill="none" stroke="#777" stroke-width="1.500"><path d="M1 1h16v16H1zM9 7V3M7 5l2-2 2 2M9 11v4M7 13l2 2 2-2M7 9H3M5 7L3 9l2 2M11 9h4M13 7l2 2-2 2" /></svg></button>
  <div class="ime">
    <svg width="24" height="26" viewBox="0 0 34 36"><path d="M6 5C-5 18 2 34 17 34S39 18 28 5c3 12-1 22-11 22S3 17 6 5z" fill="#2c8271"/><path d="M13 1v14c0 9 8 9 8 0V1" fill="none" stroke="#f9a51a" stroke-width="6"/></svg>
    <span>中</span>
    <svg width="18" height="18" viewBox="0 0 18 18"><path d="M11 0c12 8 2 24-11 15 9 0 13-7 11-15z" fill="#4a90d9"/></svg>
    <svg width="15" height="18" viewBox="0 0 15 18" fill="none" stroke="#4a90d9" stroke-width="1.500"><circle cx="4" cy="5" r="3"/><path d="M11 11h2c1 3 0 5-3 6 2-2 2-4 1-6z" fill="#4a90d9"/></svg>
    <svg width="24" height="18" viewBox="0 0 24 18"><rect x="1" y="1" width="22" height="16" rx="1" fill="#4a90d9"/><path d="M4 5h16M4 8h16M4 11h16" stroke="#fff" stroke-dasharray="2 1"/><path d="M7 14h10" stroke="#fff"/></svg>
    <svg width="16" height="18" viewBox="0 0 16 18" fill="#4a90d9"><circle cx="8" cy="4" r="4"/><path d="M1 18V12q0-4 5-4h4q5 0 5 4v6z"/></svg>
    <svg width="20" height="18" viewBox="0 0 20 18"><path d="M1 15L9 8C7 3 11 0 15 1l-3 3 3 3 4-2c0 5-4 7-7 6l-8 7q-3 0-3-3z" fill="#4a90d9"/></svg>
  </div>
  <i class="orb"></i>
</footer>
</div>
</body>
</html>
```
FILE: styles.css
```css
*{box-sizing:border-box}
body{margin:0;background:#000;min-height:100vh;padding:76px 0 77px;display:flex;font:16px/20px "Open Sans","Noto Sans CJK SC",sans-serif;color:#444645}
button{font:inherit;color:inherit;background:none;border:0;padding:0;margin:0;display:flex;align-items:center;justify-content:center;white-space:nowrap}
svg{display:block;flex:none}
i{font-style:normal}
.defs{position:absolute}
.app{flex:1;min-width:0;display:flex;flex-direction:column;background:#e6e7e5;overflow:hidden}
.caret{width:0;height:0;flex:none;border:4px solid transparent;border-top:5px solid #666;border-bottom:0}
.caret.upward{border-top:0;border-bottom:5px solid #bbb}

.header{background:#c65827;color:#fff}
.title-row{display:flex;height:42px}
.quick{flex:0 0 335px;display:flex;align-items:center;height:30px;padding-left:10px;gap:18px}
.q{gap:7px}
.q .caret{border-top-color:#fff}
.q + .q + .q + .q + .q{margin-left:-12px}
.q.q.q.q.q.more{margin-left:0}
.doc-title{flex:0 0 460px;margin:0;font-size:16px;line-height:42px;font-weight:400;white-space:nowrap}
.context-title{flex:0 0 79px;background:#a24820;color:#f2c3a6;text-align:center;line-height:42px}
.window-buttons{margin-left:auto;display:flex;gap:23px;height:30px;padding-right:13px}
.tabs{display:flex;height:31px}
.tab{padding:0 18px 2px 19px}
.tab.file{padding:0 29px 0 22px}
.tab.active{background:#f0f1ef;color:#d0562b;padding:0 18px 2px 17px}
.tab.context{flex:0 0 79px;padding:0 0 2px;background:#a24820;margin-left:9px}
.tell{display:flex;align-items:center;gap:6px;margin-left:19px;flex:1}
.tell input{flex:1;min-width:0;border:0;background:none;padding:0;font:inherit;color:#fff;outline:0}
.tell input::placeholder{color:#f0b596;opacity:1}
.tab.login{padding:0 14px 2px}
.tab.share{flex:0 0 90px;background:#a24820;gap:5px;padding:0 25px 2px 8px}

.ribbon{display:flex;height:124px;background:#f0f1ef;border-bottom:2px solid #d9dbd9;position:relative}
.group{display:flex;flex-direction:column;flex:none;padding-top:5px;position:relative;border-right:1px solid #d5d7d5;border-image:linear-gradient(transparent 4%,#d5d7d5 4%,#d5d7d5 95%,transparent 95%) 1}
.g-clip{width:153px}.g-slides{width:159px}.g-font{width:300px}.g-para{width:394px}.g-draw{width:434px}.g-edit{width:98px}
.group-body{display:flex;height:90px}
.stack{display:flex;flex-direction:column}
.group-label{display:grid;grid-template-columns:1fr 20px;height:26px;padding-top:3px;align-items:center;justify-items:center;color:#666867}
.group-label.solo{grid-template-columns:1fr}
.big{flex-direction:column;justify-content:flex-start;gap:0;padding-top:4px}
.big svg{margin-bottom:2px}
.big > .caret{margin-top:8px}
.big .line{display:flex;align-items:center;gap:6px}
.paste{width:65px}
.newslide{width:76px;padding-top:3px}
.arrange{width:62px}
.styles{width:66px;padding-top:2px}
.cmds{display:flex;flex-direction:column}
.cmd{height:30px;gap:4px;justify-content:flex-start}
.cmd .caret{margin-left:0}
.cmd.wide .caret{margin-left:8px}
.off{color:#a4a6a5}
.off .group-label{color:#666867}
.off .caret{border-top-color:#b4b6b5}
.off .caret.dark{border-top-color:#777}
.g-font .group-body{padding-left:5px}
.g-para .group-body{padding-left:4px}
.para{width:218px}
.row{display:flex;align-items:center;height:30px}
.row.tall{height:50px}
.combo{appearance:none;height:30px;border:2px solid #d3d5d3;border-radius:0;background:linear-gradient(45deg,transparent 50%,#b4b6b5 50%) right 9px center/4px 4px no-repeat,linear-gradient(-45deg,transparent 50%,#b4b6b5 50%) right 5px center/4px 4px no-repeat,linear-gradient(90deg,#fff calc(100% - 18px),#e6e7e5 calc(100% - 18px));font:inherit;color:#a4a6a5;padding:0 4px;margin:0;opacity:1}
.combo.font{width:124px}
.combo.size{width:65px;margin-right:4px}
.ib{width:29px;height:28px}
.row.tall .ib{width:28px}
.fs{font-size:20px;align-items:center}
.fs.small{font-size:17px}
.fs sup{align-self:flex-start;border:4px solid transparent}
.fs .up{border-bottom-color:#b4b6b5;border-top:0}
.fs .down{border-top-color:#b4b6b5;border-bottom:0;margin-top:3px}
.b{font-weight:700}.i{font-style:italic;font-family:"Liberation Serif",serif;font-size:20px;font-weight:700}.u{text-decoration:underline;font-weight:600}.s{font-weight:700;text-shadow:2px 2px 1px #ccc}.abc{text-decoration:line-through;font-size:14px}
.sep{width:1px;height:28px;background:#d5d7d5;margin:0 6px}
.split{width:45px;height:28px;padding-left:5px;justify-content:flex-start;gap:8px}
.g-font .split{width:43px;padding-left:4px;gap:6px}
.g-font .color{font-size:20px;padding-left:7px;gap:10px}
.av span{line-height:14px;font-size:15px}
.gallery{display:flex;width:180px;height:80px;margin:4px 0 0 6px;border:2px solid #cfd1cf;background:#fff}
.shapes{flex:1;display:grid;grid-template-columns:repeat(6,1fr);grid-template-rows:repeat(3,1fr)}
.shapes svg{width:22px;height:20px;fill:none;stroke:#6c6e6d;stroke-width:1.500}
.gallery-scroll{width:18px;display:grid;grid-template-rows:repeat(3,1fr);border-left:1px solid #cfd1cf}
.gallery-scroll button + button{border-top:2px solid #cfd1cf}
.gallery-scroll .dis{background:#e6e7e5}
.g-draw .cmds{margin-left:5px}
.g-edit .cmds{margin-left:10px}
.abac{width:20px;display:flex;flex-direction:column;font-size:12px;line-height:14px}
.abac b{color:#8a5bb0;font-weight:400}.abac em{color:#4280c2;font-style:normal}
.abac span{display:flex;align-items:center;justify-content:flex-end}
.collapse{margin:auto 13px 7px auto}

.workspace{flex:1;display:flex;position:relative;min-height:0}
.panel{flex:0 0 216px;display:flex;justify-content:space-between;border-right:2px solid #d2d4d2}
.thumbs{list-style:none;margin:0;padding:18px 0 22px 6px;display:flex;flex-direction:column;justify-content:space-between}
.thumbs li{display:flex;gap:8px;font-size:20px;line-height:12px;color:#6b6d6c}
.thumbs span{width:35px}
.thumbs svg{width:115px;height:66px;border:1px solid #c6c8c6;background:#fff}
.selected span{color:#dd6a41}
.thumbs .selected svg{outline:4px solid #f28a60;outline-offset:-1px}
.scrollbar{width:20px;margin:3px 5px 2px 0;display:flex;flex-direction:column;background:#dddfdd}
.scrollbar button{height:20px;flex:none;background:#fff;border:1px solid #c3c5c3}
.scrollbar .caret{border-width:5px 5px 0;border-top-color:#777}
.scrollbar .upward{border-width:0 5px 5px;border-bottom-color:#777}
.thumb{background:#fff;border:1px solid #b9bbb9;flex:none}
.tall-thumb{height:42px}.short-thumb{height:22px}
.left-a{flex:514}.left-b{flex:141}.right-a{flex:475}.right-b{flex:122}
.right{margin-right:1px;background:linear-gradient(#dddfdd,#dddfdd) top/100% calc(100% - 76px) no-repeat}
.right .page{background:none;border:0;height:26px;position:static}
.right .page:last-child{margin-bottom:28px;height:22px}
.stage{flex:1;display:flex;align-items:center;justify-content:center;margin:0 0 2px 2px;padding:0 0 3px 0;border-bottom:1px solid #cfd1cf}
.slide{flex:none;width:1247px;height:701px;position:relative;background:#fefefd;box-shadow:0 0 0 1px #c9cbc9;color:#111;font-family:"Liberation Sans","Noto Sans CJK SC",sans-serif}
.slide > *{position:absolute}
.deco{left:0;top:0}
.slide h2{left:97px;top:3px;margin:0;font:700 36px/48px "Open Sans","Noto Sans CJK SC",sans-serif;color:#000;white-space:nowrap}
.brand{left:1086px;top:12px;display:flex;align-items:flex-start;gap:5px;color:#087a70;font:700 32px/32px "Noto Sans CJK SC",sans-serif}
.teal{left:0;right:0;top:55px;height:5px;margin:0;border:0;background:#067a71}
.frame{left:741px;top:66px;width:497px;height:188px;border:5px solid #000;box-shadow:2px 3px 4px #999}
.note{height:48px;display:flex;align-items:center;justify-content:center;white-space:nowrap;border:1px solid #222;background:radial-gradient(ellipse at 50% 65%,#f3f4f3 0,#dcdddc 40%,#c2c4c2 90%);box-shadow:0 4px 7px rgba(0,0,0,.6)}
.note.rule-note{left:770px;top:91px;width:65px;height:45px;font-size:14px;justify-content:flex-start;padding-left:10px;background:linear-gradient(#f3f4f3,#c2c4c2)}
.n1{left:215px;top:260px;width:227px}.n2{left:42px;top:334px;width:227px}.n3{left:27px;top:407px;width:97px}.n4{left:334px;top:407px;width:138px}.n5{left:377px;top:334px;width:218px}.n6{left:487px;top:260px;width:212px}.n7{left:623px;top:401px;width:114px}.n8{left:736px;top:334px;width:120px}.n9{left:858px;top:401px;width:150px}.n10{left:973px;top:334px;width:151px}.n11{left:1077px;top:401px;width:144px}
.bar{display:flex;border:1px solid #222;background:#fff;box-shadow:0 5px 8px rgba(0,0,0,.8)}
.bar span{flex:none;display:flex;align-items:center;justify-content:center;white-space:nowrap;border:1px solid #333;border-radius:12px/14px;background:linear-gradient(#effaf1 2%,#c8ecd2 30%,#a7dfb8 52%,#b4cdbb 75%,#bfc3bf 95%)}
.bar .plain{background:#fff}
.rule-bar{left:770px;top:178px;height:44px;font-size:14px}
.log-bar{left:27px;top:485px;height:48px}
.w28{width:28px}.w31{width:31px}.w32{width:32px}.w59{width:59px}.w65{width:65px}.w75{width:75px}.w76{width:76px}.w82{width:82px}.w91{width:91px}.w97{width:97px}.w105{width:105px}.w106{width:106px}.w120{width:120px}.w126{width:126px}.w136{width:136px}.w143{width:143px}.w165{width:165px}
.raw-log{left:27px;top:569px;width:1026px;height:48px;padding-left:10px;font-family:Roboto,"Liberation Sans",sans-serif;line-height:44px;white-space:nowrap;border:1px solid #333;border-top-width:2px;background:#fff;box-shadow:0 6px 7px -1px rgba(0,0,0,.7)}
.motto{left:941px;top:649px;margin:0;font:italic 300 27px/36px "Noto Sans CJK SC",sans-serif;color:#dcdfdc}
.overlay{left:0;top:0;overflow:visible}
.play{position:absolute;right:38px;bottom:-7px;z-index:3}

.status{height:30px;display:flex;align-items:center;background:#f0f1ef;border-top:1px solid #d5d7d5;position:relative;overflow:hidden;padding:0 8px 2px 0}
.count{width:233px;padding-left:10px;white-space:nowrap}
.spell{margin:0 20px 0 10px}
.grow{flex:1}
.notes{gap:5px;margin-right:28px}
.notes + .notes{margin-right:25px}
.view{width:49px;height:30px}
.view.on{background:#cfd0cf}
.zoom{appearance:none;width:234px;height:20px;margin:0 10px 0 12px;background:linear-gradient(#aaa,#aaa) center/100% 1px no-repeat}
.zoom::-webkit-slider-thumb{appearance:none;width:6px;height:14px;background:#777}
.pct{margin:0 19px 0 20px}
.ime{position:absolute;right:161px;top:1px;bottom:0;width:194px;display:flex;align-items:center;justify-content:space-between;padding:0 9px 0 3px;background:linear-gradient(90deg,#fff,#e8f3fc);border:1px solid #c5ccd2;color:#4a90d9;font-size:20px;font-weight:500}
.orb{position:absolute;left:17px;top:23px;width:36px;height:30px;border-radius:50%;border:1px solid #3b6ea5;background:#a9c4de}
```
